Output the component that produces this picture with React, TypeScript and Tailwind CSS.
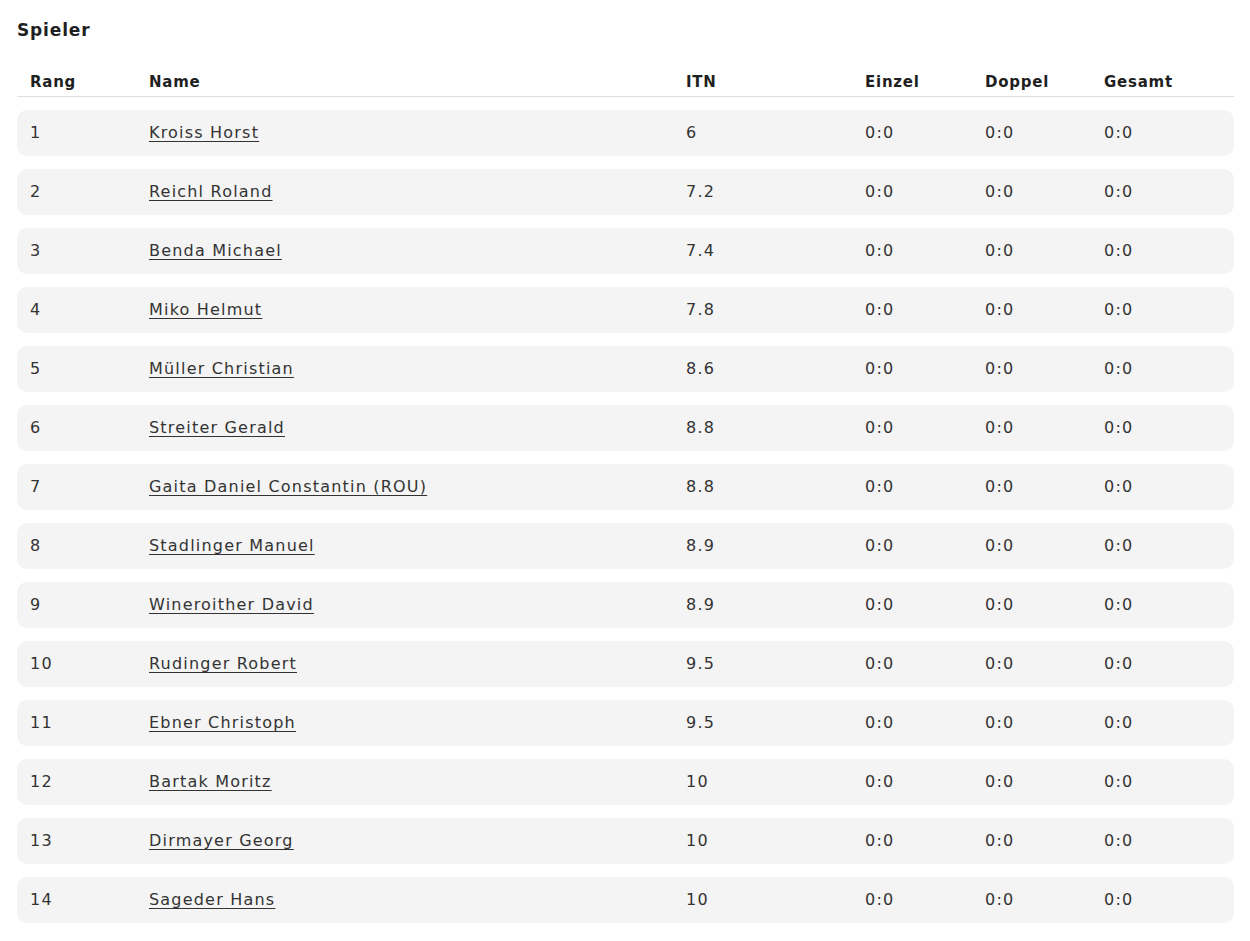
const players = [
  { rank: 1, name: "Kroiss Horst", itn: "6" },
  { rank: 2, name: "Reichl Roland", itn: "7.2" },
  { rank: 3, name: "Benda Michael", itn: "7.4" },
  { rank: 4, name: "Miko Helmut", itn: "7.8" },
  { rank: 5, name: "Müller Christian", itn: "8.6" },
  { rank: 6, name: "Streiter Gerald", itn: "8.8" },
  { rank: 7, name: "Gaita Daniel Constantin (ROU)", itn: "8.8" },
  { rank: 8, name: "Stadlinger Manuel", itn: "8.9" },
  { rank: 9, name: "Wineroither David", itn: "8.9" },
  { rank: 10, name: "Rudinger Robert", itn: "9.5" },
  { rank: 11, name: "Ebner Christoph", itn: "9.5" },
  { rank: 12, name: "Bartak Moritz", itn: "10" },
  { rank: 13, name: "Dirmayer Georg", itn: "10" },
  { rank: 14, name: "Sageder Hans", itn: "10" },
];

const cols = "grid grid-cols-[119px_537px_179px_120px_119px_1fr] items-center pl-[13px]";

export default function App() {
  return (
    <div className="min-h-screen bg-white px-[17px] pt-[19px] font-['DejaVu_Sans',sans-serif] text-[#333]">
      <h2 className="text-[17px] font-bold leading-[22px] tracking-[0.05em] text-[#1f1f1f]">Spieler</h2>

      <div className="mt-[30px] w-[1217px]">
        <div className={`${cols} h-[26px] border-b border-[#dedede] pb-[3px] text-[15px] font-bold tracking-[0.05em] text-[#1f1f1f]`}>
          <span>Rang</span>
          <span>Name</span>
          <span>ITN</span>
          <span>Einzel</span>
          <span>Doppel</span>
          <span>Gesamt</span>
        </div>

        <div className="mt-[13px] flex flex-col gap-[13px]">
          {players.map((p) => (
            <div
              key={p.rank}
              className={`${cols} h-[46px] rounded-[10px] bg-[#f4f4f4] text-[16px] tracking-[0.075em] text-[#333]`}
            >
              <span>{p.rank}</span>
              <span>
                <a href="#" className="underline underline-offset-[3px]">
                  {p.name}
                </a>
              </span>
              <span>{p.itn}</span>
              <span>0:0</span>
              <span>0:0</span>
              <span>0:0</span>
            </div>
          ))}
        </div>
      </div>
    </div>
  );
}
